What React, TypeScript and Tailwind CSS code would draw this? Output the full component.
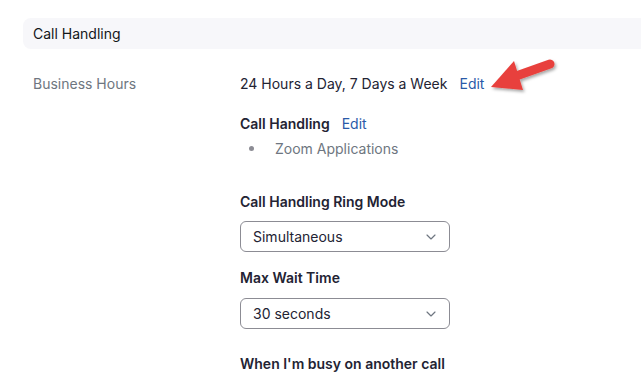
import { ChevronDown } from "lucide-react";

const Select = ({ value }: { value: string }) => (
  <div className="flex h-[31px] w-[210px] items-center justify-between rounded-md border border-[#8c8c94] pl-[12px] pr-[10px] text-[#232333]">
    <span>{value}</span>
    <ChevronDown size={16} strokeWidth={1.75} className="text-[#6e7680]" />
  </div>
);

export default function App() {
  return (
    <div className="relative h-[380px] w-[641px] overflow-hidden bg-white font-['Inter',Arial,sans-serif] text-[14px] leading-[17px] text-[#232333]">
      <div className="pt-[18px] pl-[23px]">
        <div className="flex h-[31px] items-center rounded-l-[8px] bg-[#f7f7fa] pl-[10px] text-[#131619]">
          Call Handling
        </div>
      </div>

      <div className="flex pt-[26px] pl-[33px]">
        <div className="w-[207px] text-[#6e7680]">Business Hours</div>
        <div className="flex flex-col">
          <div className="flex gap-[12px]">
            <span>24 Hours a Day, 7 Days a Week</span>
            <span className="text-[#2a5aa8]">Edit</span>
          </div>

          <div className="mt-[23px] flex gap-[12px]">
            <span className="font-semibold">Call Handling</span>
            <span className="text-[#2a5aa8]">Edit</span>
          </div>
          <ul className="mt-[8px] flex">
            <li className="flex items-center text-[#6e7680]">
              <span className="ml-[9px] mr-[21px] h-[5px] w-[5px] rounded-full bg-[#8c8c94]" />
              Zoom Applications
            </li>
          </ul>

          <div className="mt-[36px] font-semibold">Call Handling Ring Mode</div>
          <div className="mt-[11px]">
            <Select value="Simultaneous" />
          </div>

          <div className="mt-[17px] font-semibold">Max Wait Time</div>
          <div className="mt-[12px]">
            <Select value="30 seconds" />
          </div>

          <div className="mt-[26px] font-semibold">When I'm busy on another call</div>
        </div>
      </div>

      <svg
        className="absolute left-[485px] top-[55px]"
        width="75"
        height="42"
        viewBox="0 0 75 42"
      >
        <defs>
          <filter id="sh" x="-20%" y="-20%" width="150%" height="160%">
            <feDropShadow dx="1.5" dy="2" stdDeviation="1.5" floodColor="#000" floodOpacity="0.35" />
          </filter>
        </defs>
        <g filter="url(#sh)" fill="#e8413c">
          <path d="M34 20 L65 9" stroke="#e8413c" strokeWidth="9" strokeLinecap="round" />
          <polygon points="6,32 29,6 38,35" />
        </g>
      </svg>
    </div>
  );
}
